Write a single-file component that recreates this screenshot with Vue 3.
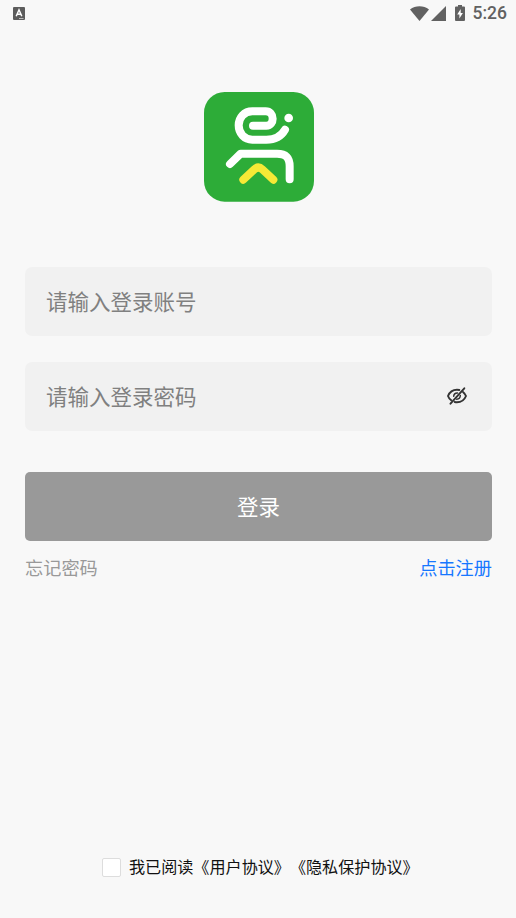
<script setup>
import { ref } from 'vue'

const account = ref('')
const password = ref('')
const visible = ref(false)
const agreed = ref(false)
</script>

<template>
  <div class="screen">
    <header class="status">
      <svg class="notice" viewBox="0 0 12 13">
        <rect width="12" height="13" rx="1" fill="#5c5c5c" />
        <path d="M3.2 9.2 6 2.8l2.8 6.4M4.2 7.2h3.6" fill="none" stroke="#fff" stroke-width="1.5" />
        <path d="M6 11.5h4.5" stroke="#bbb" stroke-width="1" />
      </svg>
      <div class="system">
        <svg class="wifi" viewBox="0 0 19 15">
          <path d="M0 3.4C5.4-.9 13.6-.9 19 3.4L9.5 15Z" fill="#616161" />
        </svg>
        <svg class="signal" viewBox="0 0 15 15">
          <path d="M15 0v15H0Z" fill="#616161" />
        </svg>
        <svg class="battery" viewBox="0 0 10 16">
          <path d="M3 0h4v1.6h2q1 0 1 1V15q0 1-1 1H1q-1 0-1-1V2.600q0-1 1-1h2Z" fill="#616161" />
          <path d="M5.700 4 2.200 9.500h2.200V13.500L7.900 8H5.700Z" fill="#fff" />
        </svg>
        <span class="time">5:26</span>
      </div>
    </header>

    <svg class="logo" viewBox="24 23 330 330">
      <rect x="24" y="23" width="330" height="329" rx="62" fill="#2dac38" />
      <g fill="none" stroke="#fff" stroke-width="24" stroke-linecap="round" stroke-linejoin="round">
        <path d="M171 124H211C224 124 230 114 230 103C230 91 222 81 209 81H169C144 81 128 100 128 123C128 147 145 166 169 166H211C240 166 256 155 267 136" />
        <path d="M102 239 134 208H243C269 208 281 220 281 246V285" />
        <path d="M142 286 175 255Q187 244 199 255L232 286" stroke="#f6e936" />
      </g>
      <circle cx="278" cy="101" r="13" fill="#fff" />
    </svg>

    <form class="form" @submit.prevent>
      <label class="field">
        <input v-model="account" type="text" placeholder="请输入登录账号" />
      </label>
      <label class="field">
        <input v-model="password" :type="visible ? 'text' : 'password'" placeholder="请输入登录密码" />
        <svg class="eye" viewBox="0 0 20 18" @click="visible = !visible">
          <g fill="none" stroke="#333" stroke-width="1.9" stroke-linecap="round">
            <path d="M12.300 3Q11.200 2.700 10 2.700C5.700 2.700 2.500 5.200 1 9Q1.900 11.600 4.200 13.300" />
            <path d="M16 4.900Q18 6.500 19 9C17.500 12.800 14.300 15.300 10 15.300Q8.800 15.300 7.700 15" />
            <path d="M10.500 5.900Q7 5.700 6.700 9.200M13.300 8.500Q13.200 12 9.700 12.200" stroke-width="1.500" />
            <path d="M17.300 1.300 3.500 16.700" />
          </g>
        </svg>
      </label>
      <button class="submit" type="submit">登录</button>
    </form>

    <nav class="links">
      <a class="forgot">忘记密码</a>
      <a class="register">点击注册</a>
    </nav>

    <label class="agreement">
      <input v-model="agreed" type="checkbox" />
      <span>我已阅读《用户协议》《隐私保护协议》</span>
    </label>
  </div>
</template>

<style>
body {
  background: #f8f8f8;
}
</style>

<style scoped>
.screen {
  box-sizing: border-box;
  display: flex;
  flex-direction: column;
  height: 918px;
  padding: 0 24px 36px 25px;
  background: #f8f8f8;
  font-family: "Noto Sans CJK SC", sans-serif;
}

.status {
  display: flex;
  flex: none;
  justify-content: space-between;
  align-items: center;
  height: 26px;
  margin: 0 -15px 0 -12px;
}

.notice {
  width: 12px;
  height: 13px;
}

.system {
  display: flex;
  align-items: center;
}

.wifi {
  width: 19px;
  height: 15px;
}

.signal {
  width: 15px;
  height: 15px;
  margin-left: 2px;
}

.battery {
  width: 10px;
  height: 16px;
  margin: 0 8px 0 9px;
}

.time {
  color: #616161;
  font: 500 17.5px/26px Roboto, sans-serif;
}

.logo {
  flex: none;
  align-self: center;
  width: 110px;
  height: 110px;
  margin-top: 66px;
}

.form {
  display: flex;
  flex-direction: column;
  margin-top: 64.5px;
}

.field {
  display: flex;
  align-items: center;
  box-sizing: border-box;
  height: 69px;
  margin-bottom: 27px;
  padding: 0 25px 0 21px;
  border-radius: 7px;
  background: #f1f1f1;
}

.field + .field {
  margin-top: -1px;
}

.field input {
  flex: 1;
  min-width: 0;
  height: 40px;
  padding: 0 0 2px;
  border: 0;
  outline: 0;
  background: transparent;
  color: #333;
  font: 21.500px/38px "Noto Sans CJK SC", sans-serif;
}

.field input::placeholder {
  color: #808080;
}

.eye {
  width: 20px;
  height: 18px;
}

.submit {
  height: 69px;
  margin-top: 14px;
  padding: 0 0 2px;
  border: 0;
  border-radius: 5px;
  background: #999;
  color: #fff;
  font: 21.500px/67px "Noto Sans CJK SC", sans-serif;
}

.links {
  display: flex;
  justify-content: space-between;
  margin-top: 12px;
  font-size: 18.200px;
  line-height: 28px;
}

.forgot {
  color: #999;
}

.register {
  color: #1677ff;
}

.agreement {
  display: flex;
  align-items: center;
  margin-top: auto;
  margin-left: 77px;
  color: #111;
  font-size: 16.100px;
  line-height: 26px;
  white-space: nowrap;
  text-spacing-trim: space-all;
}

.agreement input {
  appearance: none;
  flex: none;
  box-sizing: border-box;
  width: 19px;
  height: 19px;
  margin: 0 8px 0 0;
  border: 1px solid #ddd;
  border-radius: 2px;
  background: #fff;
}

.agreement span {
  padding-bottom: 3px;
}
</style>
